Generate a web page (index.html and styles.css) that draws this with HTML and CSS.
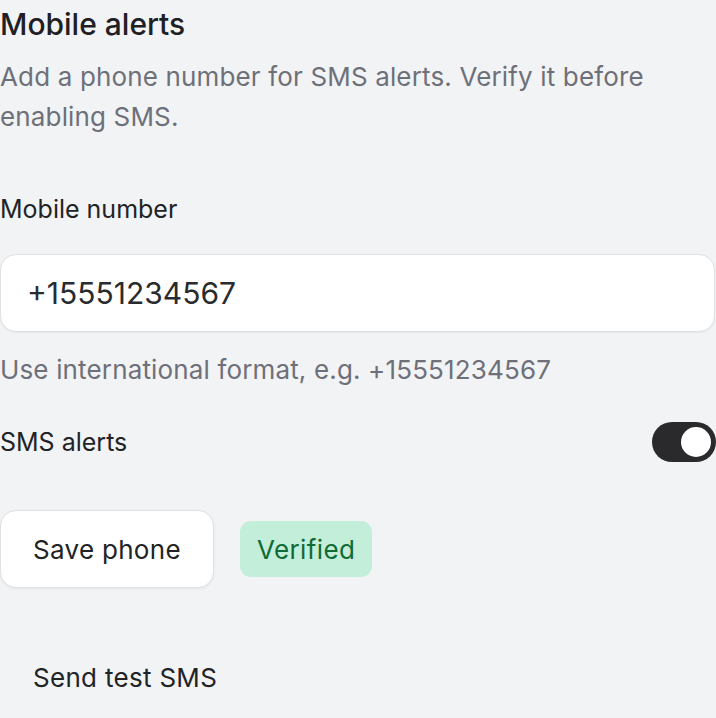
FILE: index.html
```html
<!DOCTYPE html>
<html lang="en">
<head>
<meta charset="utf-8">
<title>Mobile alerts</title>
<link rel="stylesheet" href="styles.css">
</head>
<body>
<section class="panel">
  <h2 class="title">Mobile alerts</h2>
  <p class="desc">Add a phone number for SMS alerts. Verify it before enabling SMS.</p>

  <div class="field">
    <label class="label" for="phone">Mobile number</label>
    <input class="input" id="phone" type="text" value="+15551234567">
    <p class="hint">Use international format, e.g. +15551234567</p>
  </div>

  <div class="toggle-row">
    <span class="toggle-label">SMS alerts</span>
    <span class="switch"><span class="knob"></span></span>
  </div>

  <div class="actions">
    <button class="btn">Save phone</button>
    <span class="badge">Verified</span>
  </div>

  <div class="secondary">
    <button class="btn btn-ghost">Send test SMS</button>
  </div>
</section>
</body>
</html>
```

FILE: styles.css
```css
html, body {
  margin: 0;
  padding: 0;
}
body {
  background: #f2f3f5;
  font-family: Inter, "Liberation Sans", sans-serif;
  color: #222326;
}
.panel {
  width: 716px;
  display: flex;
  flex-direction: column;
}
.title {
  margin: 1px 0 0;
  font-size: 30px;
  line-height: 46px;
  font-weight: 500;
  color: #1f2023;
}
.desc {
  margin: 10px 0 0;
  font-size: 26px;
  line-height: 40px;
  letter-spacing: 0.15px;
  color: #6e7079;
}
.field {
  margin-top: 55px;
  display: flex;
  flex-direction: column;
}
.label {
  font-size: 25px;
  line-height: 34px;
  font-weight: 400;
  color: #222326;
}
.input {
  margin: 28px 0 0;
  box-sizing: border-box;
  width: 715px;
  height: 78px;
  border: 1.5px solid #e0e1e4;
  border-radius: 16px;
  background: #ffffff;
  box-shadow: 0 1px 2px rgba(0,0,0,0.05);
  padding: 0 26px;
  font-family: inherit;
  font-size: 30px;
  color: #2a2b2f;
  outline: none;
}
.hint {
  margin: 21px 0 0;
  font-size: 26px;
  line-height: 34px;
  letter-spacing: 0.15px;
  color: #6e7079;
}
.toggle-row {
  margin-top: 35px;
  display: flex;
  align-items: center;
  justify-content: space-between;
}
.toggle-label {
  font-size: 25px;
  line-height: 40px;
  font-weight: 400;
  color: #222326;
}
.switch {
  box-sizing: border-box;
  width: 64px;
  height: 40px;
  border-radius: 20px;
  background: #2a2a2c;
  display: flex;
  align-items: center;
  justify-content: flex-end;
  padding: 0 5px;
}
.knob {
  width: 30px;
  height: 30px;
  border-radius: 50%;
  background: #ffffff;
}
.actions {
  margin-top: 48px;
  display: flex;
  align-items: center;
  gap: 26px;
}
.btn {
  box-sizing: border-box;
  height: 78px;
  padding: 0 32px;
  border: 1.5px solid #e0e1e4;
  border-radius: 16px;
  background: #ffffff;
  box-shadow: 0 1px 3px rgba(0,0,0,0.06);
  font-family: inherit;
  font-size: 26px;
  font-weight: 400;
  letter-spacing: 0.3px;
  color: #222326;
  cursor: pointer;
}
.btn-ghost {
  background: transparent;
  border-color: transparent;
  box-shadow: none;
}
.badge {
  box-sizing: border-box;
  height: 56px;
  padding: 0 17px;
  border-radius: 11px;
  background: #c3eed9;
  color: #0f6a35;
  font-size: 26px;
  font-weight: 400;
  letter-spacing: 0.4px;
  display: flex;
  align-items: center;
}
.secondary {
  margin-top: 50px;
  display: flex;
}
```
